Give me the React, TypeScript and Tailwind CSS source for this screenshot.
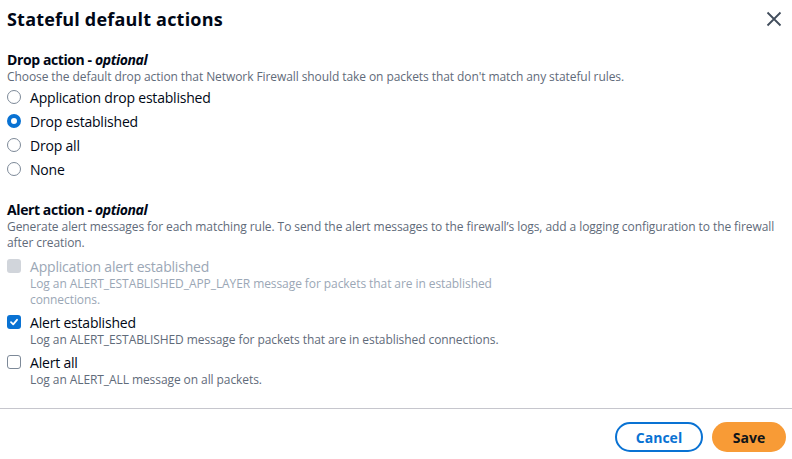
const font = { fontFamily: '"Open Sans", "Noto Sans", sans-serif' }

function Radio({ label, checked }: { label: string; checked?: boolean }) {
  return (
    <div className="flex items-center h-6">
      <div className="w-[30px] flex items-center pl-[7px]">
        {checked ? (
          <div className="w-[14px] h-[14px] rounded-full border-[4px] border-[#0972d3] bg-white" />
        ) : (
          <div className="w-[14px] h-[14px] rounded-full border border-[#7d8998] bg-white" />
        )}
      </div>
      <span className="text-[14px] tracking-[-0.2px] text-[#000716]">{label}</span>
    </div>
  )
}

function Check({
  label,
  desc,
  checked,
  disabled,
}: {
  label: string
  desc: React.ReactNode
  checked?: boolean
  disabled?: boolean
}) {
  return (
    <div className="flex flex-col">
      <div className="flex items-center h-5">
        <div className="w-[30px] flex items-center pl-[7px]">
          {disabled ? (
            <div className="w-[14px] h-[14px] rounded-[3px] bg-[#d1d5db]" />
          ) : checked ? (
            <div className="w-[14px] h-[14px] rounded-[3px] bg-[#0972d3] flex items-center justify-center">
              <svg width="10" height="10" viewBox="0 0 10 10" fill="none">
                <path d="M2 5.2 L4.2 7.3 L8 2.8" stroke="white" strokeWidth="1.8" strokeLinecap="round" strokeLinejoin="round" />
              </svg>
            </div>
          ) : (
            <div className="w-[14px] h-[14px] rounded-[3px] border border-[#7d8998] bg-white" />
          )}
        </div>
        <span className={`text-[14px] tracking-[-0.2px] ${disabled ? "text-[#9ba7b6]" : "text-[#000716]"}`}>{label}</span>
      </div>
      <p className={`pl-[30px] text-[12px] leading-4 tracking-[-0.08px] ${disabled ? "text-[#9ba7b6]" : "text-[#5f6b7a]"}`}>{desc}</p>
    </div>
  )
}

export default function App() {
  return (
    <div className="w-[792px] h-[459px] bg-white flex flex-col" style={font}>
      <div className="h-9 mt-px flex items-center justify-between px-[7px]">
        <h1 className="text-[18px] font-bold text-[#000716] tracking-[0.2px]">Stateful default actions</h1>
        <svg width="16" height="16" viewBox="0 0 16 16" className="mr-[3px]" fill="none">
          <path d="M1.5 1.5 L14.5 14.5 M14.5 1.5 L1.5 14.5" stroke="#414d5c" strokeWidth="1.8" />
        </svg>
      </div>

      <div className="flex flex-col mt-[14px]">
        <div className="px-[7px] text-[14px] leading-[18px] font-bold tracking-[-0.4px] text-[#000716]">
          Drop action - <i>optional</i>
        </div>
        <p className="px-[7px] text-[12px] leading-4 tracking-[-0.08px] text-[#5f6b7a]">
          Choose the default drop action that Network Firewall should take on packets that don't match any stateful rules.
        </p>
        <div className="flex flex-col">
          <Radio label="Application drop established" />
          <Radio label="Drop established" checked />
          <Radio label="Drop all" />
          <Radio label="None" />
        </div>
      </div>

      <div className="flex flex-col mt-[20px]">
        <div className="px-[7px] text-[14px] leading-[18px] font-bold tracking-[-0.4px] text-[#000716]">
          Alert action - <i>optional</i>
        </div>
        <p className="px-[7px] text-[12px] leading-4 tracking-[-0.08px] text-[#5f6b7a] whitespace-nowrap">
          Generate alert messages for each matching rule. To send the alert messages to the firewall’s logs, add a logging configuration to the firewall
          <br />
          after creation.
        </p>
        <div className="flex flex-col gap-1 mt-[5px]">
          <Check
            label="Application alert established"
            disabled
            desc={
              <>
                Log an ALERT_ESTABLISHED_APP_LAYER message for packets that are in established
                <br />
                connections.
              </>
            }
          />
          <Check label="Alert established" checked desc="Log an ALERT_ESTABLISHED message for packets that are in established connections." />
          <Check label="Alert all" desc="Log an ALERT_ALL message on all packets." />
        </div>
      </div>

      <div className="mt-[20px] border-t border-[#c6c6cd]" />

      <div className="flex justify-end gap-[9px] pr-[6px] pt-[13px]">
        <button className="w-[88px] h-[30px] rounded-full border-2 border-[#0972d3] text-[#0972d3] text-[14px] font-bold">
          Cancel
        </button>
        <button className="w-[74px] h-[30px] rounded-full bg-[#f89b36] text-[#0f141a] text-[14px] font-bold">
          Save
        </button>
      </div>
    </div>
  )
}
